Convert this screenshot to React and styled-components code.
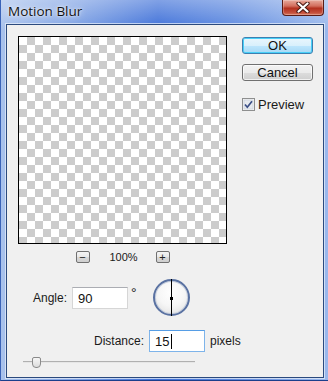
import React from 'react'
import styled, { createGlobalStyle } from 'styled-components'

const Global = createGlobalStyle`
  html, body {
    margin: 0;
    padding: 0;
    width: 328px;
    height: 381px;
    overflow: hidden;
    font-family: "Liberation Sans", Arial, sans-serif;
  }
`

const Window = styled.div`
  width: 328px;
  height: 381px;
  box-sizing: border-box;
  display: flex;
  flex-direction: column;
  padding: 0 4px 2px 5px;
  background:
    linear-gradient(to bottom, rgba(255, 255, 255, 0.35) 0%, rgba(255, 255, 255, 0) 30px),
    linear-gradient(to right, #a9c2ec 0%, #7fa2e4 22%, #3d6fd8 48%, #5c88df 70%, #9ab8ec 100%);
  border-bottom: 1px solid #1c3f8c;
  border-left: 1px solid #3a63b8;
`

const TitleBar = styled.div`
  height: 24px;
  display: flex;
  align-items: flex-start;
  justify-content: space-between;
`

const Title = styled.div`
  padding: 2px 0 0 2px;
  font-family: "Open Sans", "Liberation Sans", sans-serif;
  font-size: 13.5px;
  color: #111;
  text-shadow: 0 0 6px rgba(255, 255, 255, 0.9), 0 0 2px rgba(255, 255, 255, 0.9);
`

const CloseBtn = styled.div`
  width: 42px;
  height: 16px;
  box-sizing: border-box;
  border: 1px solid #5a1c16;
  border-top: none;
  border-radius: 0 0 4px 4px;
  background: linear-gradient(to bottom, #e7aa9d 0%, #d26e5e 40%, #b3301f 55%, #c4503c 85%, #d97a60 100%);
  box-shadow: inset 0 0 0 1px rgba(255, 255, 255, 0.25);
  display: flex;
  align-items: center;
  justify-content: center;
`

const Panel = styled.div`
  flex: 1;
  background: #f0f0f0;
  border: 1px solid #2b4a7e;
  box-shadow: 0 0 0 1px rgba(230, 238, 250, 0.75);
  padding: 11px 0 0 11px;
  display: flex;
  flex-direction: column;
  font-size: 12px;
  color: #1a1a1a;
`

const Top = styled.div`
  display: flex;
  gap: 15px;
`

const LeftCol = styled.div`
  display: flex;
  flex-direction: column;
`

const Preview = styled.div`
  width: 209px;
  height: 208px;
  box-sizing: border-box;
  border: 1px solid #000;
  background-color: #fff;
  background-image:
    linear-gradient(45deg, #cccccc 25%, transparent 25%, transparent 75%, #cccccc 75%),
    linear-gradient(45deg, #cccccc 25%, transparent 25%, transparent 75%, #cccccc 75%);
  background-size: 16px 16px;
  background-position: 0 0, 8px 8px;
`

const ZoomRow = styled.div`
  margin-top: 7px;
  height: 12px;
  display: flex;
  align-items: center;
  justify-content: center;
  gap: 20px;
  font-size: 11px;
`

const ZoomBtn = styled.div`
  width: 14px;
  height: 12px;
  box-sizing: border-box;
  border: 1px solid #707070;
  border-radius: 2px;
  background: linear-gradient(to bottom, #f4f4f4 0%, #e8e8e8 50%, #d8d8d8 51%, #cfcfcf 100%);
  display: flex;
  align-items: center;
  justify-content: center;
  font-size: 11px;
  line-height: 1;
  color: #222;
`

const Pct = styled.span`
  width: 26px;
  text-align: center;
`

const RightCol = styled.div`
  display: flex;
  flex-direction: column;
  padding-top: 1px;
`

const Button = styled.div`
  width: 71px;
  height: 17px;
  box-sizing: border-box;
  border: 1px solid ${p => (p.$default ? '#3c7fb1' : '#707070')};
  border-radius: 3px;
  margin-top: ${p => p.$mt || 0}px;
  background: ${p =>
    p.$default
      ? 'linear-gradient(to bottom, #eaf6fd 0%, #d9f0fc 50%, #bee6fd 51%, #a7d9f5 100%)'
      : 'linear-gradient(to bottom, #f2f2f2 0%, #ebebeb 50%, #dddddd 51%, #cfcfcf 100%)'};
  box-shadow: ${p => (p.$default ? 'inset 0 0 0 1px #48d0f8' : 'inset 0 0 0 1px rgba(255,255,255,0.7)')};
  display: flex;
  align-items: center;
  justify-content: center;
  font-size: 13px;
  color: #111;
`

const CheckRow = styled.label`
  margin-top: 16px;
  display: flex;
  align-items: center;
  gap: 3px;
  font-size: 13px;
`

const AngleRow = styled.div`
  margin-top: 16px;
  padding-left: 15px;
  display: flex;
  align-items: center;
  height: 37px;
`

const Label = styled.span`
  margin-right: 5px;
`

const TextBox = styled.div`
  width: 56px;
  height: 22px;
  box-sizing: border-box;
  background: #fff;
  border: 1px solid ${p => (p.$focus ? '#7eb4ea' : '#d6d6d6')};
  border-top-color: ${p => (p.$focus ? '#569de5' : '#abadb3')};
  padding: 3px 0 0 5px;
  font-size: 13px;
  color: #111;
  display: flex;
  align-items: flex-start;
`

const Caret = styled.span`
  display: inline-block;
  width: 1px;
  height: 15px;
  background: #000;
  margin-left: 1px;
`

const Degree = styled.span`
  margin: -9px 0 0 3px;
  font-size: 14px;
`

const Dial = styled.div`
  margin-left: 16px;
  width: 37px;
  height: 37px;
  box-sizing: border-box;
  border-radius: 50%;
  border: 2px solid #5a72a2;
  box-shadow: inset 0 0 0 1px #c8d0de;
  background: radial-gradient(circle at 50% 35%, #ffffff 0%, #f6f6f6 50%, #dcdcdc 100%);
  position: relative;
`

const DialLine = styled.div`
  position: absolute;
  left: 50%;
  top: -2px;
  bottom: -2px;
  width: 1px;
  background: #000;
`

const DialDot = styled.div`
  position: absolute;
  left: 50%;
  top: 50%;
  width: 3px;
  height: 3px;
  margin: -1px 0 0 -1px;
  background: #000;
`

const DistanceRow = styled.div`
  margin-top: 14px;
  padding-left: 76px;
  display: flex;
  align-items: center;
`

const Unit = styled.span`
  margin-left: 5px;
`

const Slider = styled.div`
  margin: 5px 0 0 5px;
  width: 172px;
  height: 11px;
  position: relative;
`

const Track = styled.div`
  position: absolute;
  left: 0;
  right: 0;
  top: 4px;
  height: 1px;
  background: #b0b0b0;
  border-bottom: 1px solid #e6e6e6;
`

const Thumb = styled.div`
  position: absolute;
  left: 9px;
  top: 0;
  width: 9px;
  height: 11px;
  box-sizing: border-box;
  border: 1px solid #8a8a8a;
  border-radius: 2px 2px 4px 4px;
  background: linear-gradient(to bottom, #f6f6f6, #dcdcdc);
`

export default function App() {
  return (
    <>
      <Global />
      <Window>
        <TitleBar>
          <Title>Motion Blur</Title>
          <CloseBtn>
            <svg width="14" height="11" viewBox="0 0 14 11">
              <path d="M2.5 1.5 L11.5 9.5 M11.5 1.5 L2.5 9.5" stroke="#4a1a14" strokeWidth="4.2" strokeLinecap="round" />
              <path d="M2.5 1.5 L11.5 9.5 M11.5 1.5 L2.5 9.5" stroke="#ffffff" strokeWidth="2.2" strokeLinecap="round" />
            </svg>
          </CloseBtn>
        </TitleBar>
        <Panel>
          <Top>
            <LeftCol>
              <Preview />
              <ZoomRow>
                <ZoomBtn>−</ZoomBtn>
                <Pct>100%</Pct>
                <ZoomBtn>+</ZoomBtn>
              </ZoomRow>
            </LeftCol>
            <RightCol>
              <Button $default>OK</Button>
              <Button $mt={10}>Cancel</Button>
              <CheckRow>
                <svg width="13" height="13" viewBox="0 0 13 13">
                  <rect x="0.5" y="0.5" width="12" height="12" fill="#f4f4f4" stroke="#8e8f8f" />
                  <rect x="2" y="2" width="9" height="9" fill="#e6e9ee" stroke="#c4cbd6" strokeWidth="0.6" />
                  <path d="M3 6.5 L5.3 9.2 L10 3.2" fill="none" stroke="#3b4f86" strokeWidth="1.7" />
                </svg>
                Preview
              </CheckRow>
            </RightCol>
          </Top>
          <AngleRow>
            <Label>Angle:</Label>
            <TextBox>90</TextBox>
            <Degree>°</Degree>
            <Dial>
              <DialLine />
              <DialDot />
            </Dial>
          </AngleRow>
          <DistanceRow>
            <Label>Distance:</Label>
            <TextBox $focus>
              15<Caret />
            </TextBox>
            <Unit>pixels</Unit>
          </DistanceRow>
          <Slider>
            <Track />
            <Thumb />
          </Slider>
        </Panel>
      </Window>
    </>
  )
}
